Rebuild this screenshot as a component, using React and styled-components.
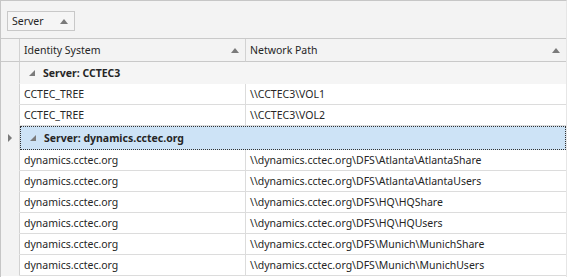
import React from 'react';
import styled, { createGlobalStyle } from 'styled-components';

const GlobalStyle = createGlobalStyle`
  html, body {
    margin: 0;
    padding: 0;
    background: #ffffff;
  }
  body {
    font-family: "Noto Sans", "Liberation Sans", sans-serif;
    font-size: 10.5px;
    color: #262626;
  }
`;

const Frame = styled.div`
  width: 567px;
  height: 277px;
  overflow: hidden;
  box-sizing: border-box;
  border-top: 1px solid #c6c6c6;
  border-left: 1px solid #c6c6c6;
  border-right: 1px solid #e6e6e6;
  background: #ffffff;
`;

const GroupPanel = styled.div`
  height: 38px;
  box-sizing: border-box;
  padding: 10px 0 0 6px;
  background: #f3f3f3;
  border-bottom: 1px solid #c9c9c9;
`;

const GroupChip = styled.div`
  display: inline-flex;
  align-items: center;
  justify-content: space-between;
  width: 68px;
  height: 20px;
  box-sizing: border-box;
  padding: 0 6px 0 4px;
  border: 1px solid #c8c8c8;
  background: #f5f5f5;
`;

const SortArrow = styled.span`
  display: inline-block;
  width: 0;
  height: 0;
  border-left: 4px solid transparent;
  border-right: 4px solid transparent;
  border-bottom: 5px solid #7a7a7a;
`;

const Row = styled.div`
  display: grid;
  grid-template-columns: 19px 226px 1fr;
  height: ${p => p.$h || 21}px;
  box-sizing: border-box;
`;

const Indicator = styled.div`
  display: flex;
  align-items: center;
  justify-content: center;
  background: #f3f3f3;
  border-right: 1px solid #d2d2d2;
  border-bottom: 1px solid ${p => (p.$header ? '#c9c9c9' : '#f3f3f3')};
`;

const HeaderCell = styled.div`
  display: flex;
  align-items: center;
  justify-content: space-between;
  padding: 0 6px 0 4px;
  background: #f3f3f3;
  border-bottom: 1px solid #c9c9c9;
  border-right: ${p => (p.$last ? 'none' : '1px solid #d2d2d2')};
`;

const Cell = styled.div`
  display: flex;
  align-items: center;
  padding: 0 4px;
  white-space: nowrap;
  overflow: hidden;
  border-bottom: 1px solid #dcdcdc;
  border-right: ${p => (p.$last ? 'none' : '1px solid #dcdcdc')};
`;

const GroupCell = styled.div`
  grid-column: 2 / 4;
  display: flex;
  align-items: center;
  gap: 8px;
  padding-left: 9px;
  font-weight: 700;
  box-sizing: border-box;
  background: ${p => (p.$selected ? '#cde3f6' : '#f5f5f5')};
  border: ${p => (p.$selected ? '1px dotted #333' : 'none')};
  border-bottom: ${p => (p.$selected ? '1px dotted #333' : '1px solid #f5f5f5')};
`;

const ExpandGlyph = styled.span`
  display: inline-block;
  width: 0;
  height: 0;
  border-left: 6px solid transparent;
  border-bottom: 6px solid #7b7b7b;
`;

const RowPointer = styled.span`
  display: inline-block;
  width: 0;
  height: 0;
  border-top: 4px solid transparent;
  border-bottom: 4px solid transparent;
  border-left: 4px solid #7a7a7a;
`;

const groups = [
  {
    server: 'CCTEC3',
    rows: [
      ['CCTEC_TREE', '\\\\CCTEC3\\VOL1'],
      ['CCTEC_TREE', '\\\\CCTEC3\\VOL2'],
    ],
  },
  {
    server: 'dynamics.cctec.org',
    selected: true,
    rows: [
      ['dynamics.cctec.org', '\\\\dynamics.cctec.org\\DFS\\Atlanta\\AtlantaShare'],
      ['dynamics.cctec.org', '\\\\dynamics.cctec.org\\DFS\\Atlanta\\AtlantaUsers'],
      ['dynamics.cctec.org', '\\\\dynamics.cctec.org\\DFS\\HQ\\HQShare'],
      ['dynamics.cctec.org', '\\\\dynamics.cctec.org\\DFS\\HQ\\HQUsers'],
      ['dynamics.cctec.org', '\\\\dynamics.cctec.org\\DFS\\Munich\\MunichShare'],
      ['dynamics.cctec.org', '\\\\dynamics.cctec.org\\DFS\\Munich\\MunichUsers'],
    ],
  },
];

const App = () => {
  return (
    <>
      <GlobalStyle />
      <Frame>
        <GroupPanel>
          <GroupChip>
            Server
            <SortArrow />
          </GroupChip>
        </GroupPanel>
        <Row $h={23}>
          <Indicator $header />
          <HeaderCell>
            Identity System
            <SortArrow />
          </HeaderCell>
          <HeaderCell $last>
            Network Path
            <SortArrow />
          </HeaderCell>
        </Row>
        {groups.map(g => (
          <React.Fragment key={g.server}>
            <Row $h={g.selected ? 24 : 22}>
              <Indicator>{g.selected && <RowPointer />}</Indicator>
              <GroupCell $selected={g.selected}>
                <ExpandGlyph />
                Server: {g.server}
              </GroupCell>
            </Row>
            {g.rows.map((r, i) => (
              <Row key={i}>
                <Indicator />
                <Cell>{r[0]}</Cell>
                <Cell $last>{r[1]}</Cell>
              </Row>
            ))}
          </React.Fragment>
        ))}
      </Frame>
    </>
  );
};

export default App;
